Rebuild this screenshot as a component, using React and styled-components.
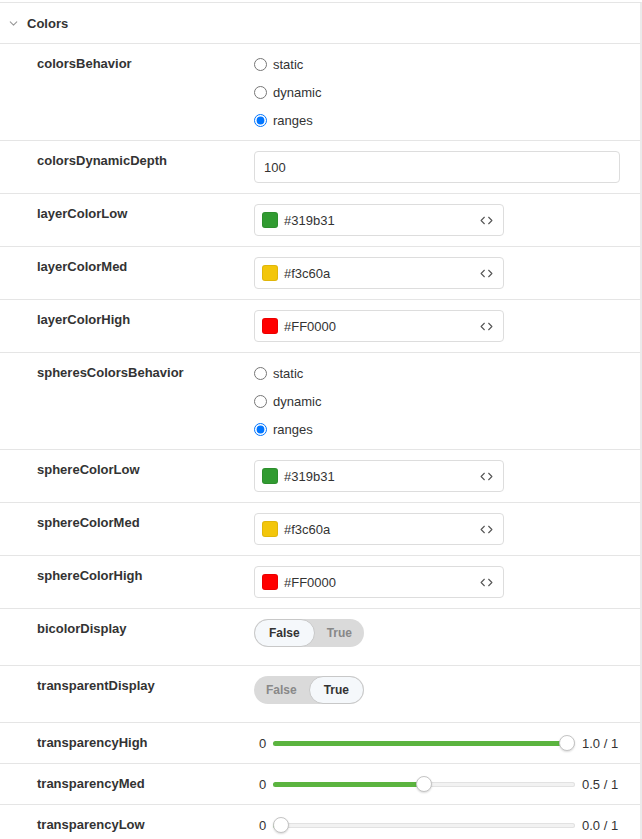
import React from "react";
import styled, { createGlobalStyle } from "styled-components";
import { ChevronDown, Code } from "lucide-react";

const Global = createGlobalStyle`
  html, body { margin: 0; padding: 0; background: #fff; }
  body { font-family: "Liberation Sans", Arial, sans-serif; font-size: 13px; color: #333; }
  * { box-sizing: border-box; }
`;

const Panel = styled.div`
  width: 642px;
  margin-top: 2px;
  border-top: 1px solid #e5e5e5;
  border-right: 2px solid #ebebeb;
`;

const Header = styled.div`
  height: 41px;
  display: flex;
  align-items: center;
  gap: 7px;
  padding-left: 7px;
  border-bottom: 1px solid #e5e5e5;
  font-weight: bold;
  font-size: 13px;
  color: #333;
  svg { color: #999; }
`;

const Row = styled.div`
  display: grid;
  grid-template-columns: 217px 1fr;
  padding: 10px 20px ${(p) => p.$pb || 10}px 37px;
  border-bottom: 1px solid #e5e5e5;
`;

const Label = styled.div`
  font-weight: bold;
  line-height: 20px;
  color: #333;
`;

const RadioGroup = styled.div`
  display: flex;
  flex-direction: column;
  gap: 8px;
`;

const RadioItem = styled.label`
  display: flex;
  align-items: center;
  gap: 6px;
  height: 20px;
  color: #333;
  input { margin: 0; width: 13px; height: 13px; }
`;

const TextInput = styled.div`
  height: 32px;
  border: 1px solid #ddd;
  border-radius: 4px;
  display: flex;
  align-items: center;
  padding: 0 9px;
  color: #333;
`;

const ColorInput = styled.div`
  width: 250px;
  height: 32px;
  border: 1px solid #ddd;
  border-radius: 4px;
  display: flex;
  align-items: center;
  padding: 0 10px 0 7px;
  gap: 6px;
  color: #333;
  svg { margin-left: auto; color: #555; }
`;

const Swatch = styled.span`
  width: 16px;
  height: 16px;
  border-radius: 3px;
  background: ${(p) => p.$c};
  box-shadow: inset 0 0 0 1px rgba(0, 0, 0, 0.08);
`;

const Toggle = styled.div`
  display: inline-flex;
  align-self: start;
  justify-self: start;
  height: 28px;
  border-radius: 14px;
  background: #dadada;
  font-weight: bold;
  font-size: 12px;
`;

const Seg = styled.span`
  display: flex;
  align-items: center;
  height: 28px;
  border-radius: 14px;
  padding: 0 ${(p) => (p.$on ? 14 : 12)}px;
  color: ${(p) => (p.$on ? "#333" : "#888")};
  background: ${(p) => (p.$on ? "#f5f8fb" : "transparent")};
  border: ${(p) => (p.$on ? "1px solid #c8c8c8" : "none")};
`;

const SliderWrap = styled.div`
  display: flex;
  align-items: center;
  height: 20px;
  gap: 7px;
`;

const MinLabel = styled.span`
  padding-left: 5px;
  color: #333;
`;

const Track = styled.div`
  position: relative;
  flex: 1;
  height: 5px;
  border-radius: 3px;
  background: #f2f2f2;
  box-shadow: inset 0 0 0 1px #e2e2e2;
`;

const Fill = styled.div`
  position: absolute;
  left: 0;
  top: 0;
  bottom: 0;
  border-radius: 3px;
  background: #5bb43f;
`;

const Thumb = styled.div`
  position: absolute;
  top: 50%;
  width: 16px;
  height: 16px;
  margin-top: -8px;
  border-radius: 50%;
  background: #fff;
  border: 1px solid #c4c4c4;
  box-shadow: 0 1px 2px rgba(0, 0, 0, 0.15);
`;

const Value = styled.span`
  width: 38px;
  color: #333;
  white-space: nowrap;
`;

function Radios({ name, value }) {
  return (
    <RadioGroup>
      {["static", "dynamic", "ranges"].map((o) => (
        <RadioItem key={o}>
          <input type="radio" name={name} defaultChecked={o === value} />
          {o}
        </RadioItem>
      ))}
    </RadioGroup>
  );
}

function ColorField({ color }) {
  return (
    <ColorInput>
      <Swatch $c={color} />
      {color}
      <Code size={13} strokeWidth={2} />
    </ColorInput>
  );
}

function Slider({ v }) {
  return (
    <SliderWrap>
      <MinLabel>0</MinLabel>
      <Track>
        <Fill style={{ width: `calc(8px + ${v} * (100% - 16px))` }} />
        <Thumb style={{ left: `calc(${v} * (100% - 16px))` }} />
      </Track>
      <Value>{v.toFixed(1)} / 1</Value>
    </SliderWrap>
  );
}

function BoolToggle({ on }) {
  return (
    <Toggle>
      <Seg $on={!on}>False</Seg>
      <Seg $on={on}>True</Seg>
    </Toggle>
  );
}

export default function App() {
  return (
    <>
      <Global />
      <Panel>
        <Header>
          <ChevronDown size={13} strokeWidth={2} />
          Colors
        </Header>
        <Row>
          <Label>colorsBehavior</Label>
          <Radios name="cb" value="ranges" />
        </Row>
        <Row>
          <Label>colorsDynamicDepth</Label>
          <TextInput>100</TextInput>
        </Row>
        <Row>
          <Label>layerColorLow</Label>
          <ColorField color="#319b31" />
        </Row>
        <Row>
          <Label>layerColorMed</Label>
          <ColorField color="#f3c60a" />
        </Row>
        <Row>
          <Label>layerColorHigh</Label>
          <ColorField color="#FF0000" />
        </Row>
        <Row>
          <Label>spheresColorsBehavior</Label>
          <Radios name="scb" value="ranges" />
        </Row>
        <Row>
          <Label>sphereColorLow</Label>
          <ColorField color="#319b31" />
        </Row>
        <Row>
          <Label>sphereColorMed</Label>
          <ColorField color="#f3c60a" />
        </Row>
        <Row>
          <Label>sphereColorHigh</Label>
          <ColorField color="#FF0000" />
        </Row>
        <Row $pb={18}>
          <Label>bicolorDisplay</Label>
          <BoolToggle on={false} />
        </Row>
        <Row $pb={18}>
          <Label>transparentDisplay</Label>
          <BoolToggle on={true} />
        </Row>
        <Row>
          <Label>transparencyHigh</Label>
          <Slider v={1} />
        </Row>
        <Row>
          <Label>transparencyMed</Label>
          <Slider v={0.5} />
        </Row>
        <Row>
          <Label>transparencyLow</Label>
          <Slider v={0} />
        </Row>
      </Panel>
    </>
  );
}
